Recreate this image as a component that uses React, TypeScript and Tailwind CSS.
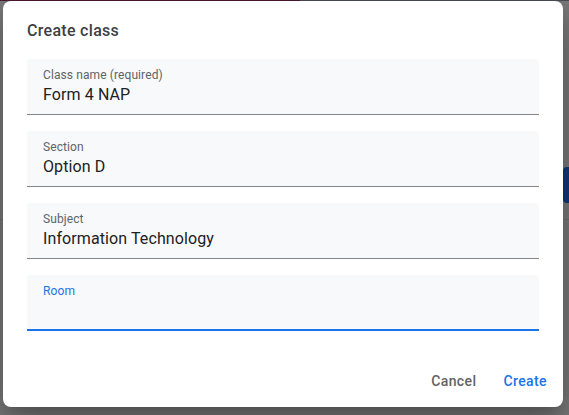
import React from "react";

const fields = [
  { label: "Class name (required)", value: "Form 4 NAP" },
  { label: "Section", value: "Option D" },
  { label: "Subject", value: "Information Technology" },
];

export default function App() {
  return (
    <div
      className="relative w-[569px] h-[415px] overflow-hidden bg-[#797979] pl-[3px] pt-[1px]"
      style={{ fontFamily: "Roboto, 'Liberation Sans', sans-serif" }}
    >
      {/* dimmed page behind */}
      <div className="absolute left-0 top-0 h-[1px] w-[300px] bg-[#4e1a30]" />
      <div className="absolute left-[300px] top-0 h-[1px] w-[269px] bg-[#4a4e54]" />
      <div className="absolute left-0 top-[219px] h-[1px] w-[569px] bg-[#6e6e6e]" />
      <div className="absolute left-[563px] top-[167px] h-[36px] w-[40px] rounded-[4px] bg-[#0e3a7a]" />

      <div className="relative flex flex-col w-[560px] h-[406px] rounded-[8px] bg-white pt-[18px] pb-[8px] shadow-[0_11px_15px_-7px_rgba(0,0,0,0.2),0_24px_38px_3px_rgba(0,0,0,0.14),0_9px_46px_8px_rgba(0,0,0,0.12)]">
        <div className="px-[24px] h-[24px] text-[16px] leading-[24px] font-medium text-[#3c4043] tracking-[0.3px]">
          Create class
        </div>
        <div className="mt-[16px] px-[24px] flex flex-col gap-[16px]">
          {fields.map((f) => (
            <div
              key={f.label}
              className="h-[56px] rounded-t-[4px] bg-[#f8f9fa] border-b border-[#80868b] px-[16px] pt-[8px]"
            >
              <div className="text-[12px] leading-[16px] tracking-[0.1px] text-[#5f6368]">{f.label}</div>
              <div className="text-[16px] leading-[23px] tracking-[0.1px] text-[#202124]">{f.value}</div>
            </div>
          ))}
          <div className="h-[56px] rounded-t-[4px] bg-[#f8f9fa] border-b-2 border-[#1a73e8] px-[16px] pt-[8px]">
            <div className="text-[12px] leading-[16px] tracking-[0.1px] text-[#1a73e8]">Room</div>
          </div>
        </div>
        <div className="mt-auto flex justify-end gap-[11px] pr-[8px]">
          <button className="h-[36px] px-[8px] text-[14px] font-medium tracking-[0.4px] text-[#5f6368] rounded-[4px]">
            Cancel
          </button>
          <button className="h-[36px] px-[8px] text-[14px] font-medium tracking-[0.4px] text-[#1a73e8] rounded-[4px]">
            Create
          </button>
        </div>
      </div>
    </div>
  );
}
